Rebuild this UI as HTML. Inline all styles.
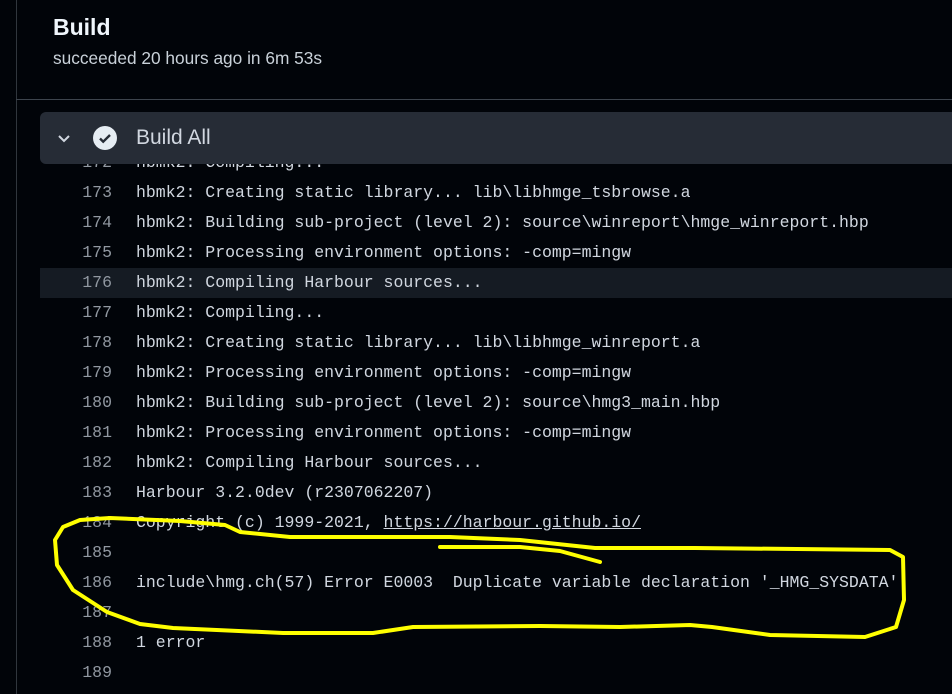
<!DOCTYPE html>
<html><head><meta charset="utf-8"><style>
body{margin:0;width:952px;height:694px;background:#010409;overflow:hidden;position:relative;font-family:"Liberation Sans",sans-serif}
.vl{position:absolute;left:16px;top:0;width:1px;height:694px;background:#30363d}
.hl{position:absolute;left:16px;top:99px;right:0;height:1px;background:#3d444d}
h1{position:absolute;left:53px;top:14px;margin:0;font-size:23px;font-weight:bold;color:#f0f6fc}
.sub{position:absolute;left:53px;top:48px;font-size:17.3px;color:#c9d1d9}
.bar{position:absolute;left:40px;top:112px;width:930px;height:52px;background:#262c36;border-radius:6px;z-index:2}
.bar .t{position:absolute;left:96px;top:14px;font-size:21px;color:#d1d7e0}
.log{position:absolute;left:0;top:148px;width:952px;font-family:"Liberation Mono",monospace;font-size:16.5px;color:#d1d7e0}
.row{height:30px;line-height:30px;position:relative;white-space:pre}
.row .n{position:absolute;left:40px;width:72px;text-align:right;color:#9198a1}
.row .c{position:absolute;left:136px}
.hi{background:#151b23;margin-left:40px}
.hi .n{left:0}.hi .c{left:96px}
a{color:#d1d7e0;text-decoration:underline}
svg.y{position:absolute;left:0;top:0;z-index:3}
</style></head><body>
<div class="vl"></div><div class="hl"></div>
<h1>Build</h1><div class="sub">succeeded 20 hours ago in 6m 53s</div>
<div class="bar">
<svg style="position:absolute;left:16px;top:18px" width="16" height="16" viewBox="0 0 16 16"><path d="M3 6l5 5 5-5" fill="none" stroke="#d1d7e0" stroke-width="2"/></svg>
<svg style="position:absolute;left:53px;top:14px" width="24" height="24" viewBox="0 0 24 24"><circle cx="12" cy="12" r="12" fill="#e6edf3"/><path d="M7 12.5l3.2 3.2L17 9" fill="none" stroke="#262c36" stroke-width="2.4"/></svg>
<div class="t">Build All</div></div>
<div class="log">
<div class="row"><span class="n">172</span><span class="c">hbmk2: Compiling...</span></div>
<div class="row"><span class="n">173</span><span class="c">hbmk2: Creating static library... lib\libhmge_tsbrowse.a</span></div>
<div class="row"><span class="n">174</span><span class="c">hbmk2: Building sub-project (level 2): source\winreport\hmge_winreport.hbp</span></div>
<div class="row"><span class="n">175</span><span class="c">hbmk2: Processing environment options: -comp=mingw</span></div>
<div class="row hi"><span class="n">176</span><span class="c">hbmk2: Compiling Harbour sources...</span></div>
<div class="row"><span class="n">177</span><span class="c">hbmk2: Compiling...</span></div>
<div class="row"><span class="n">178</span><span class="c">hbmk2: Creating static library... lib\libhmge_winreport.a</span></div>
<div class="row"><span class="n">179</span><span class="c">hbmk2: Processing environment options: -comp=mingw</span></div>
<div class="row"><span class="n">180</span><span class="c">hbmk2: Building sub-project (level 2): source\hmg3_main.hbp</span></div>
<div class="row"><span class="n">181</span><span class="c">hbmk2: Processing environment options: -comp=mingw</span></div>
<div class="row"><span class="n">182</span><span class="c">hbmk2: Compiling Harbour sources...</span></div>
<div class="row"><span class="n">183</span><span class="c">Harbour 3.2.0dev (r2307062207)</span></div>
<div class="row"><span class="n">184</span><span class="c">Copyright (c) 1999-2021, <a>https://harbour.github.io/</a></span></div>
<div class="row"><span class="n">185</span><span class="c"></span></div>
<div class="row"><span class="n">186</span><span class="c">include\hmg.ch(57) Error E0003  Duplicate variable declaration '_HMG_SYSDATA'</span></div>
<div class="row"><span class="n">187</span><span class="c"></span></div>
<div class="row"><span class="n">188</span><span class="c">1 error</span></div>
<div class="row"><span class="n">189</span><span class="c"></span></div>
</div>
<svg class="y" width="952" height="694"><g fill="none" stroke="#ffff00" stroke-width="4" stroke-linejoin="round" stroke-linecap="round">
<path d="M595 548 L695 548 L890 550 L903 557 L904 600 L896 627 L865 637 L770 635 L712 627 L690 625 L620 627 L540 626 L413 627 L373 633 L283 633 L173 628 L140 624 L107 612 L73 590 L57 565 L55 540 L63 527 L80 520 L110 518 L180 521 L225 525 L240 532 L290 537 L450 537 L520 540 L595 548"/>
<path d="M440 547 L520 547 L560 551 L600 562"/></g></svg>
</body></html>
